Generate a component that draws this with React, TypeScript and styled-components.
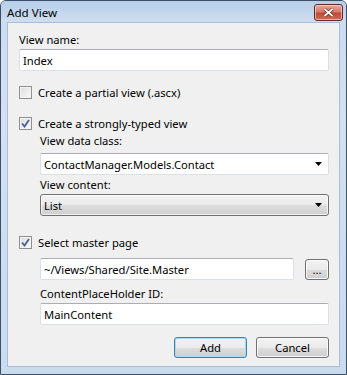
import React from "react";
import styled, { createGlobalStyle } from "styled-components";

const GlobalStyle = createGlobalStyle`
  html, body {
    margin: 0;
    padding: 0;
    background: #ffffff;
  }
  body {
    font-family: "Segoe UI", "Noto Sans", "Open Sans", sans-serif;
    font-size: 11.2px;
    color: #000;
  }
`;

const Window = styled.div`
  box-sizing: border-box;
  width: 347px;
  height: 375px;
  border: 1px solid #3b4f66;
  border-radius: 6px 6px 0 0;
  background: linear-gradient(#bcd1ea 0px, #cddcef 20px, #d3e1f1 120px, #c9dbef 100%);
  display: flex;
  flex-direction: column;
  overflow: hidden;
`;

const TitleBar = styled.div`
  height: 21px;
  display: flex;
  align-items: center;
  justify-content: space-between;
  padding: 0 3px 0 6px;
  background: linear-gradient(#b7cde8, #cfdef0);
`;

const Title = styled.span`
  font-size: 11.6px;
  color: #000;
  padding-top: 1px;
`;

const CloseButton = styled.div`
  box-sizing: border-box;
  width: 29px;
  height: 17px;
  margin-top: 1px;
  border: 1px solid #5c2a2a;
  border-radius: 3px;
  background: linear-gradient(#e8a89f 0%, #d8786b 45%, #c14a3a 55%, #cf6b55 100%);
  box-shadow: inset 0 0 0 1px rgba(255, 230, 225, 0.6);
  display: flex;
  align-items: center;
  justify-content: center;
`;

const Client = styled.div`
  flex: 1;
  margin: 0 6px 7px 6px;
  border: 1px solid #a9bdd6;
  background: #f0f0f0;
  padding: 9px 10px 0 11px;
  display: flex;
  flex-direction: column;
`;

const Label = styled.div<{ $indent?: boolean; $top?: number; $bottom?: number }>`
  height: 15px;
  line-height: 15px;
  margin-left: ${(p) => (p.$indent ? 21 : 0)}px;
  margin-top: ${(p) => p.$top ?? 0}px;
  margin-bottom: ${(p) => p.$bottom ?? 2}px;
  white-space: nowrap;
`;

const TextBox = styled.div<{ $indent?: boolean; $width?: number }>`
  box-sizing: border-box;
  height: 22px;
  ${(p) => (p.$width ? `width: ${p.$width}px;` : "")}
  margin-left: ${(p) => (p.$indent ? 21 : 0)}px;
  background: #fff;
  border: 1px solid #dbdfe6;
  border-top-color: #abadb3;
  border-radius: 2px;
  padding: 0 3px;
  display: flex;
  align-items: center;
  white-space: nowrap;
`;

const Combo = styled(TextBox)`
  justify-content: space-between;
  padding-right: 6px;
`;

const DropList = styled.div<{ $indent?: boolean }>`
  box-sizing: border-box;
  height: 22px;
  margin-left: ${(p) => (p.$indent ? 21 : 0)}px;
  border: 1px solid #707070;
  border-radius: 3px;
  background: linear-gradient(#f2f2f2 0%, #ebebeb 50%, #dddddd 51%, #cfcfcf 100%);
  box-shadow: inset 0 0 0 1px rgba(255, 255, 255, 0.7);
  padding: 0 6px 0 3px;
  display: flex;
  align-items: center;
  justify-content: space-between;
`;

const CheckRow = styled.label<{ $top: number }>`
  display: flex;
  align-items: center;
  gap: 6px;
  height: 15px;
  margin-top: ${(p) => p.$top}px;
  margin-bottom: 2px;
`;

const Box = styled.span`
  box-sizing: border-box;
  width: 13px;
  height: 13px;
  border: 1px solid #8e8f8f;
  background: linear-gradient(135deg, #dcdcdc, #fbfbfb);
  box-shadow: inset 0 0 0 1px #f4f4f4;
  display: flex;
  align-items: center;
  justify-content: center;
`;

const Row = styled.div`
  display: flex;
  align-items: center;
  gap: 11px;
  margin-left: 21px;
  margin-top: 6px;
`;

const Button = styled.div<{ $default?: boolean; $w: number; $h?: number }>`
  box-sizing: border-box;
  width: ${(p) => p.$w}px;
  height: ${(p) => p.$h ?? 22}px;
  border: 1px solid ${(p) => (p.$default ? "#3c7fb1" : "#707070")};
  border-radius: 3px;
  background: linear-gradient(#f2f2f2 0%, #ebebeb 50%, #dddddd 51%, #cfcfcf 100%);
  box-shadow: inset 0 0 0 1px ${(p) => (p.$default ? "#a6dcf6" : "rgba(255,255,255,0.8)")};
  display: flex;
  align-items: center;
  justify-content: center;
`;

const ButtonBar = styled.div`
  display: flex;
  justify-content: flex-end;
  gap: 9px;
  margin-top: 12px;
`;

const Arrow = () => (
  <svg width="7" height="4" viewBox="0 0 7 4">
    <path d="M0 0h7L3.5 4z" fill="#000" />
  </svg>
);

const Check = () => (
  <svg width="9" height="9" viewBox="0 0 9 9">
    <path d="M1 4.5 L3.5 7.5 L8 1" fill="none" stroke="#4a5f97" strokeWidth="1.8" />
  </svg>
);

const CheckBox = ({ checked, label, top }: { checked?: boolean; label: string; top: number }) => (
  <CheckRow $top={top}>
    <Box>{checked && <Check />}</Box>
    <span>{label}</span>
  </CheckRow>
);

export default function App() {
  return (
    <>
      <GlobalStyle />
      <Window>
        <TitleBar>
          <Title>Add View</Title>
          <CloseButton>
            <svg width="11" height="9" viewBox="0 0 11 9">
              <path d="M1.5 1 L9.5 8 M9.5 1 L1.5 8" stroke="#5a1f1a" strokeWidth="3.2" />
              <path d="M1.5 1 L9.5 8 M9.5 1 L1.5 8" stroke="#fff" strokeWidth="1.8" />
            </svg>
          </CloseButton>
        </TitleBar>
        <Client>
          <Label>View name:</Label>
          <TextBox>Index</TextBox>
          <CheckBox label="Create a partial view (.ascx)" top={14} />
          <CheckBox checked label="Create a strongly-typed view" top={14} />
          <Label $indent $bottom={5}>View data class:</Label>
          <Combo $indent>
            <span>ContactManager.Models.Contact</span>
            <Arrow />
          </Combo>
          <Label $indent $top={2}>View content:</Label>
          <DropList $indent>
            <span>List</span>
            <Arrow />
          </DropList>
          <CheckBox checked label="Select master page" top={19} />
          <Row>
            <TextBox $width={256}>~/Views/Shared/Site.Master</TextBox>
            <Button $w={24} $h={21}>...</Button>
          </Row>
          <Label $indent $top={6}>ContentPlaceHolder ID:</Label>
          <TextBox $indent>MainContent</TextBox>
          <ButtonBar>
            <Button $default $w={73} $h={21}>Add</Button>
            <Button $w={73} $h={21}>Cancel</Button>
          </ButtonBar>
        </Client>
      </Window>
    </>
  );
}
